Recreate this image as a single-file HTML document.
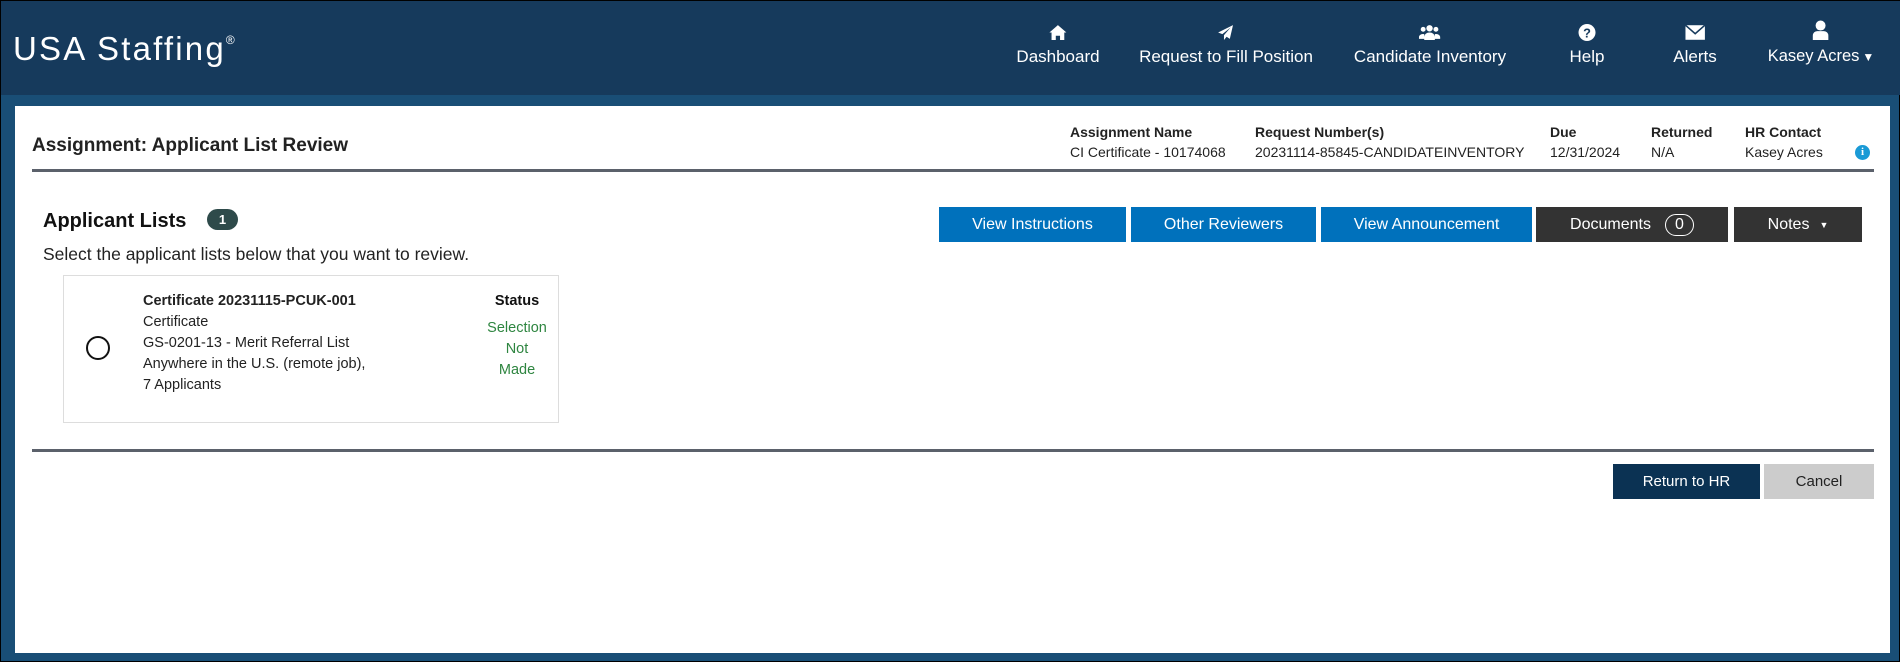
<!DOCTYPE html>
<html><head><meta charset="utf-8"><style>
*{margin:0;padding:0;box-sizing:border-box}
body{width:1900px;height:662px;overflow:hidden;background:#194e76;font-family:"Liberation Sans",Arial,sans-serif;position:relative;border:1px solid #000}
.hdr{position:absolute;left:0;top:0;width:1900px;height:94px;background:#163a5c}
.logo{position:absolute;left:12px;top:29px;color:#fff;font-size:33px;letter-spacing:2.2px;font-weight:normal}
.logo sup{font-size:12px;vertical-align:top;position:relative;top:3px;letter-spacing:0}
.nav{position:absolute;top:23px;color:#fff;font-size:17px;text-align:center;transform:translateX(-50%);white-space:nowrap}
.nav svg{display:block;margin:0 auto 6px;height:17px}
.panel{position:absolute;left:14px;top:105px;width:1875px;height:547px;background:#fff}
.a{position:absolute;white-space:nowrap}
.t{font-size:19px;font-weight:bold;color:#222}
.ml{font-size:14px;font-weight:bold;color:#222}
.mv{font-size:14px;color:#222}
.rule{position:absolute;height:3px;background:#5b616b}
.btn{position:absolute;top:206px;height:35px;color:#fff;font-size:16px;display:flex;align-items:center;justify-content:center}
.blue{background:#0071bc}.dark{background:#333}
.ct{font-size:14.5px;color:#222;line-height:21px}
.g{color:#2e8540;font-size:14.5px;text-align:center;line-height:21px}
</style></head><body>
<div class="hdr"></div>
<div class="logo">USA Staffing<sup>®</sup></div>

<div class="nav" style="left:1057px"><svg viewBox="0 0 16 16"><path d="M8 1L0 8h2v7h4v-4h4v4h4V8h2z" fill="#fff"/></svg>Dashboard</div>
<div class="nav" style="left:1225px"><svg viewBox="0 0 16 16"><path d="M15 1L1 8l4 1.5L13 3 6.5 10.5V15l2.5-3 3 2z" fill="#fff"/></svg>Request to Fill Position</div>
<div class="nav" style="left:1429px"><svg viewBox="0 0 20 16"><circle cx="10" cy="4" r="3" fill="#fff"/><circle cx="4" cy="5" r="2.3" fill="#fff"/><circle cx="16" cy="5" r="2.3" fill="#fff"/><path d="M5 15v-3a5 4 0 0 1 10 0v3zM0 14v-2a4 3 0 0 1 5-2.5V14zM20 14v-2a4 3 0 0 0-5-2.5V14z" fill="#fff"/></svg>Candidate Inventory</div>
<div class="nav" style="left:1586px"><svg viewBox="0 0 16 16"><circle cx="8" cy="8" r="8" fill="#fff"/><text x="8" y="12.5" font-size="12" font-weight="bold" text-anchor="middle" fill="#163a5c" font-family="Liberation Sans">?</text></svg>Help</div>
<div class="nav" style="left:1694px"><svg viewBox="0 0 18 14"><rect x="1" y="1" width="16" height="12" fill="#fff"/><path d="M1 1l8 7 8-7" stroke="#163a5c" stroke-width="1.3" fill="none"/></svg>Alerts</div>
<div class="nav" style="left:1820px;top:19px;font-size:16.5px"><svg viewBox="0 0 16 18" style="height:20px;margin-bottom:7px"><circle cx="8" cy="5" r="4.5" fill="#fff"/><path d="M1 18v-4a4 4 0 0 1 4-4h6a4 4 0 0 1 4 4v4z" fill="#fff"/></svg>Kasey Acres<span style="font-size:12px;margin-left:3px">▼</span></div>

<div class="panel"></div>
<div class="a t" style="left:31px;top:134px">Assignment: Applicant List Review</div>
<div class="a ml" style="left:1069px;top:123px">Assignment Name</div>
<div class="a mv" style="left:1069px;top:143px">CI Certificate - 10174068</div>
<div class="a ml" style="left:1254px;top:123px">Request Number(s)</div>
<div class="a mv" style="left:1254px;top:143px">20231114-85845-CANDIDATEINVENTORY</div>
<div class="a ml" style="left:1549px;top:123px">Due</div>
<div class="a mv" style="left:1549px;top:143px">12/31/2024</div>
<div class="a ml" style="left:1650px;top:123px">Returned</div>
<div class="a mv" style="left:1650px;top:143px">N/A</div>
<div class="a ml" style="left:1744px;top:123px">HR Contact</div>
<div class="a mv" style="left:1744px;top:143px">Kasey Acres</div>
<div class="a" style="left:1854px;top:144px;width:15px;height:15px;border-radius:50%;background:#1a9ad6;color:#fff;font-size:11px;font-weight:bold;text-align:center;line-height:15px;font-family:'Liberation Serif',serif">i</div>
<div class="rule" style="left:31px;top:168px;width:1842px"></div>

<div class="a" style="left:42px;top:209px;font-size:20px;font-weight:bold;color:#111">Applicant Lists</div>
<div class="a" style="left:206px;top:208px;width:31px;height:21px;border-radius:11px;background:#2e4a4a;color:#fff;font-size:13px;font-weight:bold;text-align:center;line-height:21px">1</div>
<div class="a" style="left:42px;top:243px;font-size:17.5px;color:#222">Select the applicant lists below that you want to review.</div>

<div class="a" style="left:62px;top:274px;width:496px;height:148px;border:1px solid #ddd"></div>
<div class="a" style="left:85px;top:335px;width:24px;height:24px;border:2px solid #111;border-radius:50%"></div>
<div class="a ct" style="left:142px;top:290px"><b>Certificate 20231115-PCUK-001</b><br>Certificate<br>GS-0201-13 - Merit Referral List<br>Anywhere in the U.S. (remote job),<br>7 Applicants</div>
<div class="a g" style="left:476px;top:290px;width:80px"><b style="color:#111">Status</b></div>
<div class="a g" style="left:476px;top:317px;width:80px">Selection<br>Not<br>Made</div>

<div class="btn blue" style="left:938px;width:187px">View Instructions</div>
<div class="btn blue" style="left:1130px;width:185px">Other Reviewers</div>
<div class="btn blue" style="left:1320px;width:211px">View Announcement</div>
<div class="btn dark" style="left:1535px;width:192px">Documents<span style="display:inline-block;margin-left:14px;border:1px solid #fff;border-radius:12px;width:29px;height:22px;line-height:20px;text-align:center">0</span></div>
<div class="btn dark" style="left:1733px;width:128px">Notes <span style="font-size:9px;margin-left:10px">▼</span></div>

<div class="rule" style="left:31px;top:448px;width:1842px"></div>
<div class="btn" style="left:1612px;top:463px;width:147px;background:#0b3253;font-size:15px">Return to HR</div>
<div class="btn" style="left:1763px;top:463px;width:110px;background:#ccc;color:#222;font-size:15px">Cancel</div>
</body></html>
